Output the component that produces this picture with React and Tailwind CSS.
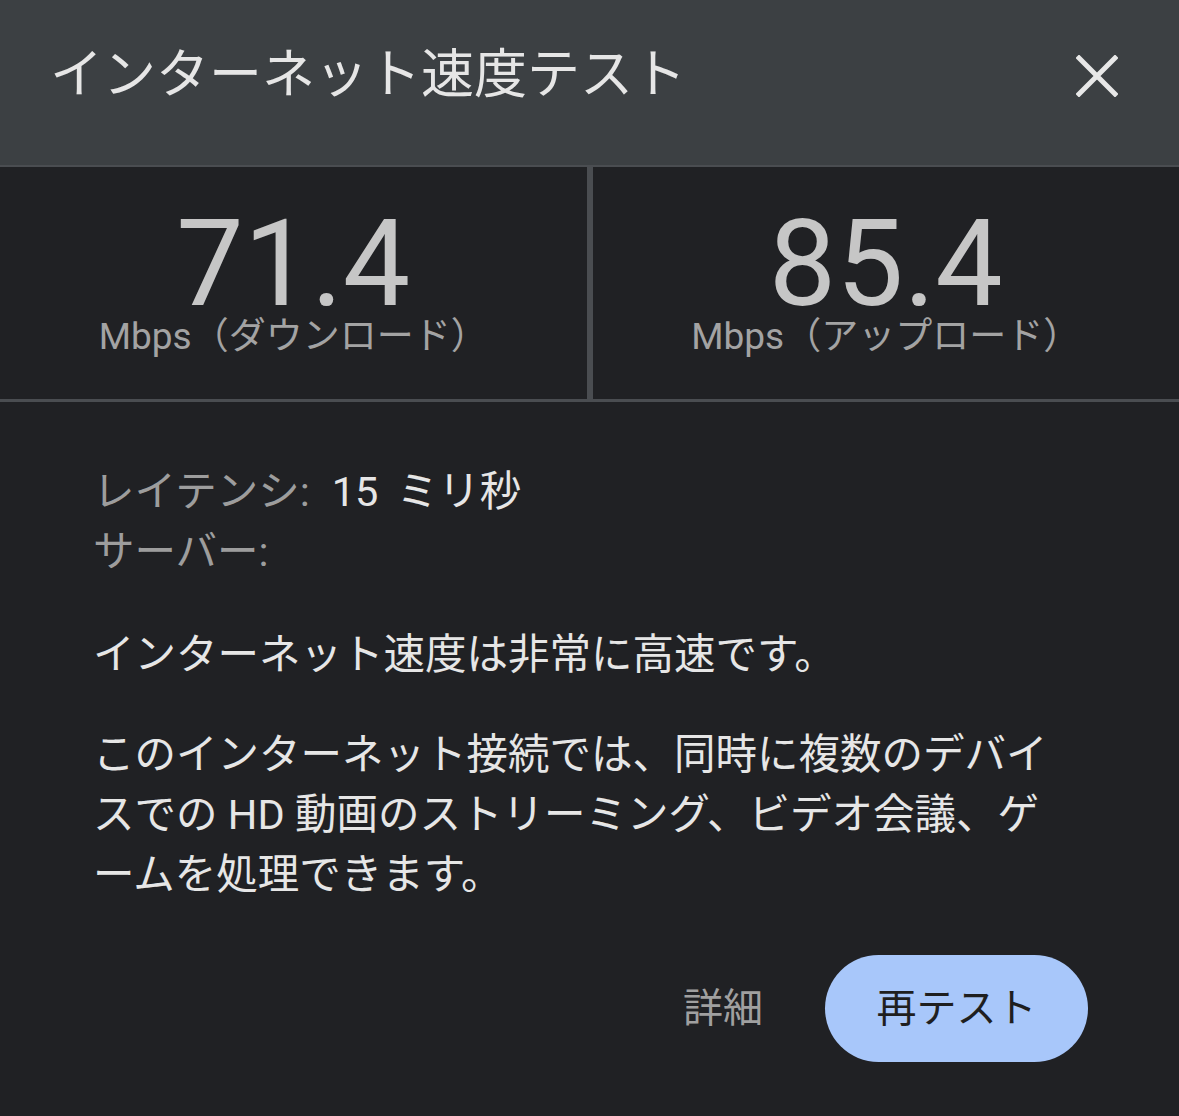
import React from "react";

const font = { fontFamily: "Roboto, 'Noto Sans CJK JP', sans-serif" };

const SpeedCell = ({ value, label }) => (
  <div className="flex-1 flex flex-col items-center pt-[47px]">
    <div className="text-[120px] leading-[100px] text-[#c6c6c6]">{value}</div>
    <div className="text-[37px] leading-[46px] text-[#a3a3a3]">{label}</div>
  </div>
);

const App = () => {
  return (
    <div className="w-[1179px] h-[1116px] bg-[#202124] flex flex-col overflow-hidden" style={font}>
      {/* header */}
      <div className="h-[165px] bg-[#3c4043] flex items-center justify-between pl-[50px] pr-[60px] pb-[14px]">
        <h1 className="text-[53px] leading-none text-[#e6e6e6]">インターネット速度テスト</h1>
        <button className="w-[44px] h-[44px] flex items-center justify-center">
          <svg width="42" height="42" viewBox="0 0 42 42">
            <path d="M3 3 L39 39 M39 3 L3 39" stroke="#e8e8e8" strokeWidth="5" strokeLinecap="square" />
          </svg>
        </button>
      </div>

      {/* results */}
      <div className="flex h-[237px] border-t-[2px] border-b-[3px] border-[#4a4d51]">
        <SpeedCell value="71.4" label="Mbps（ダウンロード）" />
        <div className="w-[6px] bg-[#4a4d51]" />
        <SpeedCell value="85.4" label="Mbps（アップロード）" />
      </div>

      {/* details */}
      <div className="flex-1 flex flex-col px-[93px] pt-[60px]">
        <div className="text-[41.5px] leading-[60px]">
          <span className="text-[#9d9d9d]">レイテンシ:</span>
          <span className="text-[#e6e6e6] ml-[22px] [word-spacing:8px]">15 ミリ秒</span>
        </div>
        <div className="text-[41.5px] leading-[60px] text-[#9d9d9d]">サーバー:</div>

        <p className="mt-[43px] text-[41.5px] leading-[60px] text-[#e6e6e6]">
          インターネット速度は非常に高速です。
        </p>
        <p className="mt-[40px] text-[41.5px] leading-[60px] text-[#e6e6e6] pr-[18px]">
          このインターネット接続では、同時に複数のデバイスでの HD 動画のストリーミング、ビデオ会議、ゲームを処理できます。
        </p>

        <div className="mt-[50px] flex items-center justify-end gap-[62px] mr-[-2px]">
          <button className="text-[40px] leading-none text-[#a0a0a0]">詳細</button>
          <button className="w-[263px] h-[107px] rounded-full bg-[#a8c7fa] text-[40px] leading-none text-[#1f1f1f]">
            再テスト
          </button>
        </div>
      </div>
    </div>
  );
};

export default App;
